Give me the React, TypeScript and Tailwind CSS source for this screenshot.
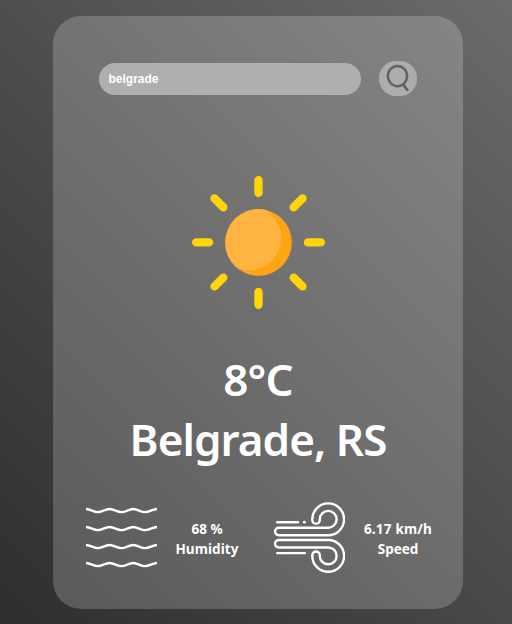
import React from "react";

function SearchIcon() {
  return (
    <svg width="38" height="35" viewBox="379 61 38 35" fill="none" stroke="#626262">
      <ellipse cx="397.5" cy="76.1" rx="9.6" ry="10.1" strokeWidth="2.5" />
      <path d="M403 84.4 L407.9 90.8" strokeWidth="2.7" />
    </svg>
  );
}

function SunIcon() {
  return (
    <svg width="134" height="134" viewBox="191.5 175.5 134 134" className="block">
      <defs>
        <clipPath id="disc">
          <circle cx="258.5" cy="242.5" r="33.3" />
        </clipPath>
      </defs>
      <g transform="translate(0.5 0.4)">
        <circle cx="258.5" cy="242.5" r="33.3" fill="#ffa514" />
        <circle cx="248.5" cy="237.8" r="32.6" fill="#ffb341" clipPath="url(#disc)" />
        <path
          d="M258.5 180.2V193M258.5 292.1V304.9M196.2 242.5H209M308 242.5H320.8M214.5 198.5L223.3 207.3M302.5 198.5L293.7 207.3M214.5 286.5L223.3 277.7M302.5 286.5L293.7 277.7"
          stroke="#ffd507"
          strokeWidth="8.4"
          strokeLinecap="round"
        />
      </g>
    </svg>
  );
}

function WavesIcon() {
  return (
    <svg width="71" height="72" viewBox="0 0 71 72" fill="none" stroke="#fff" strokeWidth="2.3">
      {[7, 25, 43, 61].map((y) => (
        <path
          key={y}
          d="M0 0C4.5 0 7.5 3.2 11.8 3.2S19 0 23.6 0S31 3.2 35.4 3.2S42.8 0 47.2 0S54.6 3.2 59 3.2S66.5 0 71 0"
          transform={`translate(0 ${y})`}
        />
      ))}
    </svg>
  );
}

function WindIcon() {
  return (
    <svg
      width="72"
      height="72"
      viewBox="273 502.1 72 72"
      fill="none"
      stroke="#fff"
      strokeWidth="2.4"
      strokeLinecap="round"
    >
      <path d="M277.2 522.3H298" />
      <path d="M304.3 522.3H304.5" strokeWidth="2.8" />
      <path d="M277.2 553.2H305" />
      <path d="M278.8 527.8H328.2A8.4 8.4 0 1 0 319.8 519.4V520A3.75 3.75 0 0 1 312.3 520V519.4A15.9 15.9 0 1 1 328.2 535.3H278.8A3.75 3.75 0 0 1 278.8 527.8Z" />
      <path d="M278.8 547.6H328.2A8.4 8.4 0 1 1 319.8 556V555.4A3.75 3.75 0 0 0 312.3 555.4V556A15.9 15.9 0 1 0 328.2 540.1H278.8A3.75 3.75 0 0 0 278.8 547.6Z" />
    </svg>
  );
}

export default function App() {
  return (
    <main className="h-[624px] w-[512px] overflow-hidden bg-linear-45 from-[#2e2e2e] to-[#6b6b6b] pt-4 pl-[53px] font-['Noto_Sans','Open_Sans',sans-serif] text-white">
      <section className="flex h-[593px] w-[410px] flex-col items-center rounded-[28px] bg-white/20">
        <div className="mt-[45px] flex h-[35px] w-full items-center gap-[18px] pl-[46px]">
          <input
            defaultValue="belgrade"
            className="h-8 w-[262px] rounded-full bg-[#afafaf] px-[9.5px] font-['Liberation_Sans',Arial,sans-serif] text-[12px] font-bold outline-none"
          />
          <button className="h-[35px] w-[38px] rounded-[17px] bg-[#adadad]">
            <SearchIcon />
          </button>
        </div>
        <div className="mt-[79px] h-[134px]">
          <SunIcon />
        </div>
        <div className="mt-10 text-center text-[44px] leading-[60px] font-semibold whitespace-nowrap">
          <h1 className="tracking-[-0.8px]">8°C</h1>
          <h2 className="tracking-[-0.95px]">Belgrade, RS</h2>
        </div>
        <div className="mt-[32.5px] flex w-full items-center pl-[33px] text-center text-[13.5px] leading-5 font-bold whitespace-nowrap">
          <WavesIcon />
          <div className="ml-[10px] w-20 pt-0.5">
            <p>68 %</p>
            <p className="tracking-[0.1px]">Humidity</p>
          </div>
          <div className="ml-[26px]">
            <WindIcon />
          </div>
          <div className="ml-[13px] w-20 pt-0.5">
            <p className="tracking-[0.2px]">6.17 km/h</p>
            <p>Speed</p>
          </div>
        </div>
      </section>
    </main>
  );
}
